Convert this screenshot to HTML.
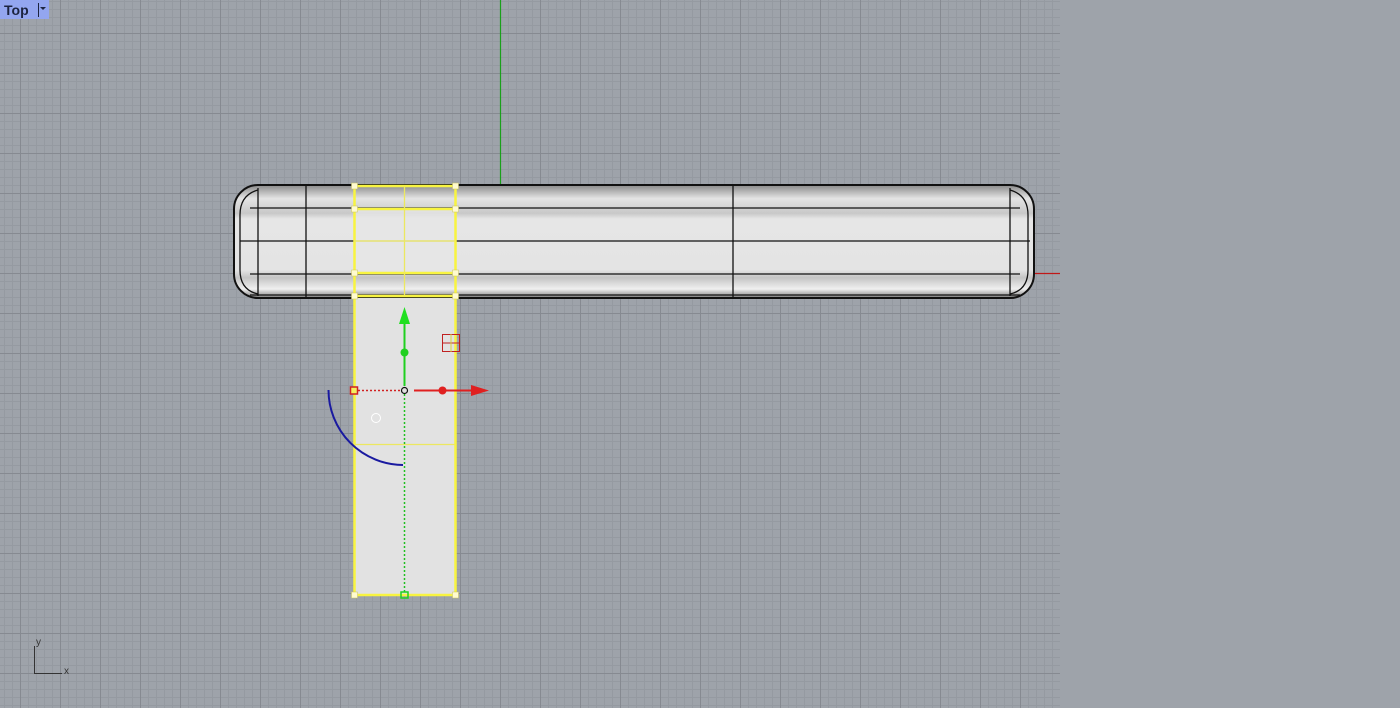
<!DOCTYPE html>
<html><head><meta charset="utf-8"><style>
html,body{margin:0;padding:0;width:1400px;height:708px;overflow:hidden;background:#9ea3aa;}
svg{position:absolute;left:0;top:0;}
</style></head><body>
<svg width="1400" height="708" xmlns="http://www.w3.org/2000/svg">
<defs>
<pattern id="minor" width="8" height="8" patternUnits="userSpaceOnUse" x="4" y="1">
<path d="M0 0.5H8M0.5 0V8" stroke="#959aa1" stroke-width="1" fill="none"/>
</pattern>
<pattern id="major" width="40" height="40" patternUnits="userSpaceOnUse" x="20" y="33">
<path d="M0 0.5H40M0.5 0V40" stroke="#868a91" stroke-width="1" fill="none"/>
</pattern>
<linearGradient id="bar" x1="0" y1="0" x2="0" y2="1">
<stop offset="0" stop-color="#8a8a8a"/>
<stop offset="0.12" stop-color="#e4e4e4"/>
<stop offset="0.25" stop-color="#c8c8c8"/>
<stop offset="0.3" stop-color="#e6e6e6"/>
<stop offset="0.75" stop-color="#e4e4e4"/>
<stop offset="0.82" stop-color="#c4c4c4"/>
<stop offset="0.92" stop-color="#f0f0f0"/>
<stop offset="1" stop-color="#7a7a7a"/>
</linearGradient>
</defs>
<rect x="0" y="0" width="1060" height="708" fill="#9ea3aa"/>
<rect x="0" y="0" width="1060" height="708" fill="url(#minor)"/>
<rect x="0" y="0" width="1060" height="708" fill="url(#major)"/>
<rect x="1060" y="0" width="340" height="708" fill="#9ea3aa"/>
<line x1="500.5" y1="0" x2="500.5" y2="186" stroke="#1aa01a" stroke-width="1.2"/>
<line x1="1034" y1="273.5" x2="1060" y2="273.5" stroke="#c01818" stroke-width="1.2"/>
<rect x="234" y="185" width="800" height="113" rx="24" fill="url(#bar)" stroke="#111" stroke-width="2"/>
<g stroke="#111" stroke-width="1.3" fill="none">
<line x1="250" y1="208" x2="1020" y2="208"/>
<line x1="240" y1="241" x2="1030" y2="241"/>
<line x1="250" y1="274" x2="1020" y2="274"/>
<line x1="250" y1="295" x2="1020" y2="295"/>
<line x1="258" y1="188" x2="258" y2="296"/>
<line x1="306" y1="186" x2="306" y2="297"/>
<line x1="733" y1="186" x2="733" y2="297"/>
<line x1="1010" y1="188" x2="1010" y2="296"/>
<path d="M258 190 Q240 195 240 215 V270 Q240 290 258 294"/>
<path d="M1010 190 Q1028 195 1028 215 V270 Q1028 290 1010 294"/>
</g>
<rect x="354" y="298" width="101" height="297" fill="#e2e2e2"/>
<rect x="354" y="210" width="101" height="63" fill="#e6e6e6" opacity="0.8"/>
<g stroke="#f8f440" stroke-width="2.5" fill="none">
<rect x="354.5" y="186" width="101" height="409"/>
<line x1="354" y1="209" x2="455" y2="209"/>
<line x1="354" y1="273" x2="455" y2="273"/>
<line x1="354" y1="296" x2="455" y2="296"/>
</g>
<g stroke="#ece860" stroke-width="1.3" fill="none">
<line x1="404.5" y1="186" x2="404.5" y2="296"/>
<line x1="354" y1="241" x2="455" y2="241"/>
<line x1="354" y1="444.5" x2="455" y2="444.5"/>
</g>
<g fill="#fffbd0" stroke="#c8c460" stroke-width="0.5">
<rect x="351.5" y="183" width="6" height="6"/><rect x="452.5" y="183" width="6" height="6"/>
<rect x="351.5" y="206" width="6" height="6"/><rect x="452.5" y="206" width="6" height="6"/>
<rect x="351.5" y="270" width="6" height="6"/><rect x="452.5" y="270" width="6" height="6"/>
<rect x="351.5" y="293" width="6" height="6"/><rect x="452.5" y="293" width="6" height="6"/>
<rect x="351.5" y="592" width="6" height="6"/><rect x="452.5" y="592" width="6" height="6"/>
</g>
<line x1="404.5" y1="394" x2="404.5" y2="592" stroke="#20c020" stroke-width="1.5" stroke-dasharray="2,2"/>
<line x1="358" y1="390.5" x2="401" y2="390.5" stroke="#d02020" stroke-width="1.5" stroke-dasharray="2,2"/>
<line x1="404.5" y1="386" x2="404.5" y2="322" stroke="#20d020" stroke-width="2"/>
<polygon points="404.5,307 399,324 410,324" fill="#20e020"/>
<circle cx="404.5" cy="352.5" r="4" fill="#20d020"/>
<line x1="414" y1="390.5" x2="474" y2="390.5" stroke="#e02020" stroke-width="2"/>
<polygon points="489,390.5 471,385 471,396" fill="#e02020"/>
<circle cx="442.5" cy="390.5" r="4" fill="#e02020"/>
<circle cx="404.5" cy="390.5" r="3" fill="none" stroke="#111" stroke-width="1.2"/>
<rect x="350.5" y="387" width="7" height="7" fill="#f4f060" stroke="#d02020" stroke-width="1.5"/>
<rect x="401" y="592" width="7" height="6" fill="none" stroke="#20d020" stroke-width="1.5"/>
<path d="M328.5 390 A75 75 0 0 0 403 465" fill="none" stroke="#1a1aa0" stroke-width="2"/>
<circle cx="376" cy="418" r="4.5" fill="none" stroke="#fff" stroke-width="1"/>
<g stroke-width="1" fill="none">
<rect x="442.5" y="334.5" width="17" height="17" stroke="#c02020"/>
<line x1="442" y1="343" x2="460" y2="343" stroke="#c02020"/>
<line x1="451" y1="334" x2="451" y2="352" stroke="#d8d040"/>
</g>
<path d="M34.5 646 V673.5 H62" fill="none" stroke="#333" stroke-width="1"/>
<text x="36" y="645" font-family="Liberation Sans, sans-serif" font-size="10" fill="#333">y</text>
<text x="64" y="674" font-family="Liberation Sans, sans-serif" font-size="10" fill="#333">x</text>
<rect x="0" y="0" width="49" height="19" fill="#93a6f0"/>
<text x="4" y="15" font-family="Liberation Sans, sans-serif" font-weight="bold" font-size="14" fill="#1c2440">Top</text>
<line x1="38.5" y1="3" x2="38.5" y2="17" stroke="#1c2440" stroke-width="1"/>
<polygon points="40,7 46,7 43,10" fill="#1c2440"/>
</svg>
</body></html>
